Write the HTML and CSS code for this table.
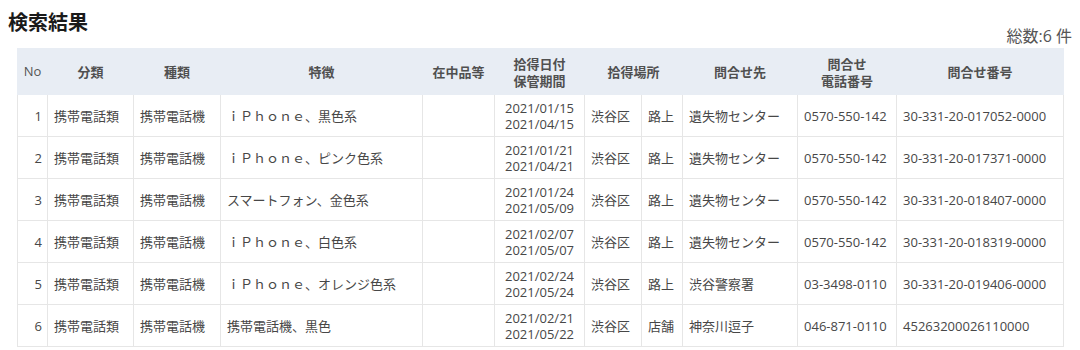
FILE: index.html
```html
<!DOCTYPE html>
<html lang="ja">
<head>
<meta charset="utf-8">
<title>検索結果</title>
<link rel="stylesheet" href="styles.css">
</head>
<body>
<div class="page">
  <div class="head">
    <h2 class="title">検索結果</h2>
    <div class="total">総数:6 件</div>
  </div>
  <table class="results">
    <colgroup>
      <col style="width:30px"><col style="width:86px"><col style="width:87px"><col style="width:202px"><col style="width:72px"><col style="width:90px"><col style="width:57px"><col style="width:41px"><col style="width:115px"><col style="width:99px"><col style="width:167px">
    </colgroup>
    <thead>
      <tr>
        <th class="no">No</th>
        <th>分類</th>
        <th>種類</th>
        <th>特徴</th>
        <th>在中品等</th>
        <th>拾得日付<br>保管期間</th>
        <th colspan="2">拾得場所</th>
        <th>問合せ先</th>
        <th>問合せ<br>電話番号</th>
        <th>問合せ番号</th>
      </tr>
    </thead>
    <tbody>
      <tr><td class="num">1</td><td>携帯電話類</td><td>携帯電話機</td><td>ｉＰｈｏｎｅ、黒色系</td><td></td><td class="date">2021/01/15<br>2021/04/15</td><td>渋谷区</td><td>路上</td><td>遺失物センター</td><td>0570-550-142</td><td>30-331-20-017052-0000</td></tr>
      <tr><td class="num">2</td><td>携帯電話類</td><td>携帯電話機</td><td>ｉＰｈｏｎｅ、ピンク色系</td><td></td><td class="date">2021/01/21<br>2021/04/21</td><td>渋谷区</td><td>路上</td><td>遺失物センター</td><td>0570-550-142</td><td>30-331-20-017371-0000</td></tr>
      <tr><td class="num">3</td><td>携帯電話類</td><td>携帯電話機</td><td>スマートフォン、金色系</td><td></td><td class="date">2021/01/24<br>2021/05/09</td><td>渋谷区</td><td>路上</td><td>遺失物センター</td><td>0570-550-142</td><td>30-331-20-018407-0000</td></tr>
      <tr><td class="num">4</td><td>携帯電話類</td><td>携帯電話機</td><td>ｉＰｈｏｎｅ、白色系</td><td></td><td class="date">2021/02/07<br>2021/05/07</td><td>渋谷区</td><td>路上</td><td>遺失物センター</td><td>0570-550-142</td><td>30-331-20-018319-0000</td></tr>
      <tr><td class="num">5</td><td>携帯電話類</td><td>携帯電話機</td><td>ｉＰｈｏｎｅ、オレンジ色系</td><td></td><td class="date">2021/02/24<br>2021/05/24</td><td>渋谷区</td><td>路上</td><td>渋谷警察署</td><td>03-3498-0110</td><td>30-331-20-019406-0000</td></tr>
      <tr><td class="num">6</td><td>携帯電話類</td><td>携帯電話機</td><td>携帯電話機、黒色</td><td></td><td class="date">2021/02/21<br>2021/05/22</td><td>渋谷区</td><td>店舗</td><td>神奈川逗子</td><td>046-871-0110</td><td>45263200026110000</td></tr>
    </tbody>
  </table>
</div>
</body>
</html>
```

FILE: styles.css
```css
html, body {
  margin: 0;
  padding: 0;
  background: #ffffff;
}

body {
  padding: 8px;
  font-family: "Open Sans", "Noto Sans CJK JP", sans-serif;
  color: #474747;
}

.head {
  display: flex;
  justify-content: space-between;
  align-items: flex-end;
  height: 40px;
}

.title {
  align-self: flex-start;
  margin: 0;
  font-family: "Noto Sans CJK JP", sans-serif;
  font-size: 20px;
  line-height: 28px;
  font-weight: 700;
  color: #1a1a1a;
}

.total {
  font-family: "Open Sans", "Noto Sans CJK JP", sans-serif;
  font-size: 16px;
  line-height: 20px;
  color: #555555;
  margin-bottom: 2px;
}

.results {
  margin: 0 9px;
  width: 1046px;
  table-layout: fixed;
  border-collapse: collapse;
  font-size: 13px;
}

.results th {
  height: 45px;
  padding: 0 4px;
  background: #e8edf4;
  border: 1px solid #e8edf4;
  font-family: "Noto Sans CJK JP", sans-serif;
  font-weight: 700;
  line-height: 17px;
  color: #505050;
  text-align: center;
  vertical-align: middle;
}

.results th.no {
  font-family: "Open Sans", sans-serif;
  font-weight: 400;
  color: #555555;
}

.results td {
  height: 41px;
  padding: 0 6px;
  border: 1px solid #e6e6e6;
  line-height: 16px;
  white-space: nowrap;
  overflow: hidden;
  vertical-align: middle;
  text-align: left;
}

.results td.num {
  text-align: right;
  padding-right: 5px;
}

.results td.date {
  text-align: center;
  padding: 0;
}
```
